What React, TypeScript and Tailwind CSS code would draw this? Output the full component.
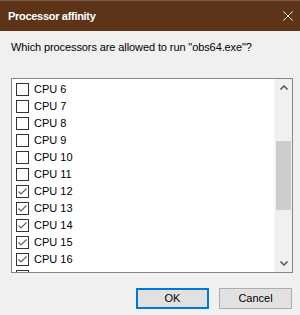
const cpus = [6, 7, 8, 9, 10, 11, 12, 13, 14, 15, 16];

function Check({ checked }: { checked: boolean }) {
  return (
    <span className="w-[13px] h-[13px] border border-[#333333] bg-white flex items-center justify-center shrink-0">
      {checked && (
        <svg width="11" height="11" viewBox="0 0 11 11">
          <path d="M1.5 5.5 L4 8 L9.5 2.5" fill="none" stroke="#606060" strokeWidth="1.2" />
        </svg>
      )}
    </span>
  );
}

export default function App() {
  return (
    <div
      className="w-[300px] h-[315px] bg-[#f0f0f0] flex flex-col overflow-hidden"
      style={{ fontFamily: '"Liberation Sans", Arial, sans-serif' }}
    >
      {/* Title bar */}
      <div className="h-[31px] bg-[#5e3419] border-t border-[#7a5a44] flex items-center justify-between pl-2 pr-[7px] shrink-0">
        <span className="text-white text-[11px] font-bold tracking-[-0.3px]">Processor affinity</span>
        <svg width="10" height="10" viewBox="0 0 10 10">
          <path d="M0.5 0.5 L9.5 9.5 M9.5 0.5 L0.5 9.5" stroke="#ffffff" strokeWidth="1" />
        </svg>
      </div>

      <p className="mt-[8px] ml-[11px] text-[11px] leading-[16px] tracking-[-0.1px] text-black">
        Which processors are allowed to run "obs64.exe"?
      </p>

      {/* List */}
      <div className="mt-[23px] ml-[11px] w-[282px] h-[195px] border border-[#828790] bg-white flex shrink-0">
        <div className="flex-1 overflow-hidden pt-[2px] pl-[4px] border-r border-[#f7f7f7]">
          {cpus.map((n) => (
            <div key={n} className="h-[17px] flex items-center gap-[5px] text-[11px] text-black">
              <Check checked={n >= 12} />
              <span>CPU {n}</span>
            </div>
          ))}
          {/* next row, only its checkbox top shows */}
          <div className="h-[17px] flex items-center">
            <Check checked={true} />
          </div>
        </div>
        <div className="w-[17px] bg-[#f0f0f0] flex flex-col">
          <div className="h-[17px] flex items-center justify-center">
            <svg width="8" height="5" viewBox="0 0 8 5">
              <path d="M0.5 4.5 L4 1 L7.5 4.5" fill="none" stroke="#606060" strokeWidth="1.6" />
            </svg>
          </div>
          <div className="flex-1 flex flex-col">
            <div className="h-[45px]" />
            <div className="h-[69px] mx-[1px] bg-[#cdcdcd]" />
          </div>
          <div className="h-[17px] flex items-center justify-center">
            <svg width="8" height="5" viewBox="0 0 8 5">
              <path d="M0.5 0.5 L4 4 L7.5 0.5" fill="none" stroke="#606060" strokeWidth="1.6" />
            </svg>
          </div>
        </div>
      </div>

      {/* Buttons */}
      <div className="mt-[15px] flex gap-[10px] pl-[136px]">
        <button className="w-[73px] h-[21px] bg-[#e1e1e1] border-2 border-[#0078d7] text-[11px] text-black flex items-center justify-center">
          OK
        </button>
        <button className="w-[73px] h-[21px] bg-[#e1e1e1] border border-[#adadad] text-[11px] text-black flex items-center justify-center">
          Cancel
        </button>
      </div>
    </div>
  );
}
